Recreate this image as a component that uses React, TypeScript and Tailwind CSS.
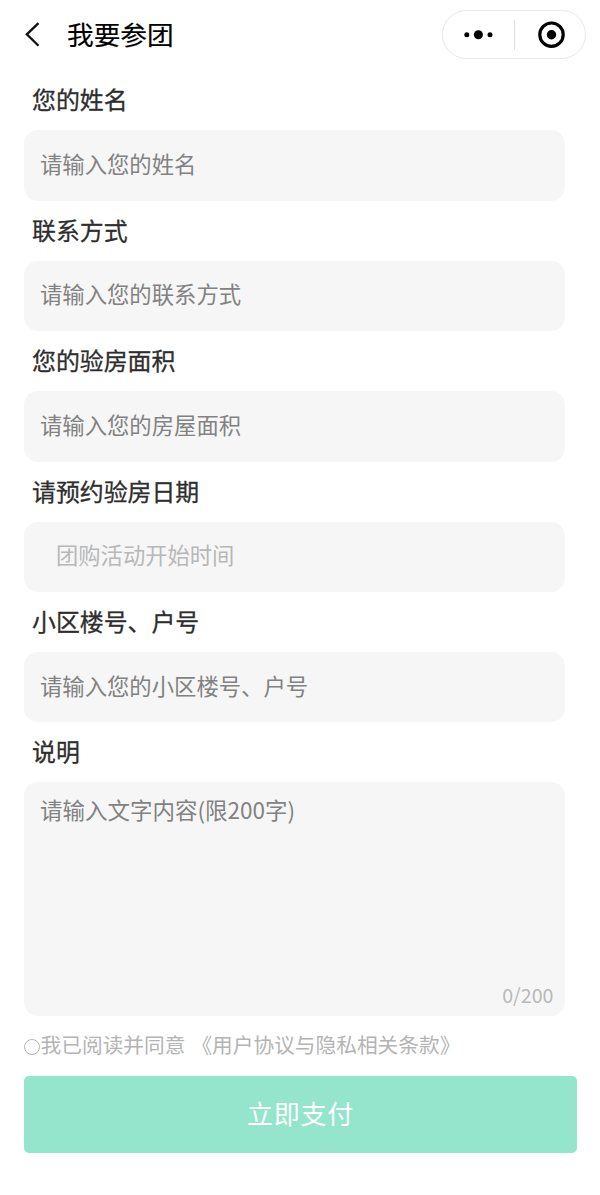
import { useState } from "react";

type FieldProps = { label: string; placeholder: string; muted?: boolean };

function Label({ children }: { children: string }) {
  return (
    <span className="flex h-[60px] items-center pb-[2px] pl-2 text-[23.9px] text-[#2e2e2e] [-webkit-text-stroke:0.3px_#2e2e2e]">
      {children}
    </span>
  );
}

function Field({ label, placeholder, muted }: FieldProps) {
  return (
    <label className="block">
      <Label>{label}</Label>
      <input
        className={
          muted
            ? "block h-[70.4px] w-full rounded-[14px] bg-[#f6f6f6] pr-4 pb-[5px] pl-8 text-[22.3px] outline-none placeholder:text-[#b8b8b8]"
            : "block h-[70.4px] w-full rounded-[14px] bg-[#f6f6f6] pr-4 pb-[5px] pl-4 text-[22.35px] outline-none placeholder:text-[#828282]"
        }
        placeholder={placeholder}
      />
    </label>
  );
}

const fields: FieldProps[] = [
  { label: "您的姓名", placeholder: "请输入您的姓名" },
  { label: "联系方式", placeholder: "请输入您的联系方式" },
  { label: "您的验房面积", placeholder: "请输入您的房屋面积" },
  { label: "请预约验房日期", placeholder: "团购活动开始时间", muted: true },
  { label: "小区楼号、户号", placeholder: "请输入您的小区楼号、户号" },
];

export default function App() {
  const [text, setText] = useState("");
  const [agreed, setAgreed] = useState(false);
  return (
    <main className="h-[1195px] w-[600px] overflow-hidden bg-white font-['Noto_Sans_CJK_SC',sans-serif]">
      <header className="flex h-[70.4px] items-start justify-between pr-[14px] pl-[24px]">
        <div className="flex h-[70px] items-center gap-[26px]">
          <svg className="h-[26px] w-[17px]" viewBox="0 0 17 26" fill="none" stroke="#111" strokeWidth="2.3">
            <path d="M14.5 1.2 2.8 12.3l11.7 11.5" />
          </svg>
          <h1 className="pb-[2px] text-[26.7px] text-black [-webkit-text-stroke:0.15px_#000]">我要参团</h1>
        </div>
        <div className="mt-[10px] flex h-[49px] w-[144px] items-center rounded-full border border-[#e8e8e8]">
          <button className="flex h-full w-[71px] items-center justify-center" aria-label="更多">
            <svg className="h-[12px] w-[30px]" viewBox="0 0 30 12" fill="#000">
              <circle cx="2.8" cy="5.7" r="2.5" />
              <circle cx="14.4" cy="5.7" r="4.5" />
              <circle cx="26" cy="5.7" r="2.5" />
            </svg>
          </button>
          <span className="h-[30px] w-px bg-[#e0e0e0]" />
          <button className="flex h-full flex-1 items-center justify-center pl-[2px]" aria-label="关闭">
            <svg className="h-[28px] w-[28px]" viewBox="0 0 28 28">
              <circle cx="14.5" cy="13.7" r="11.7" fill="none" stroke="#000" strokeWidth="3.2" />
              <circle cx="14.5" cy="13.7" r="4.7" />
            </svg>
          </button>
        </div>
      </header>
      <form className="w-[565.4px] pl-6" onSubmit={(e) => e.preventDefault()}>
        {fields.map((f) => (
          <Field key={f.label} {...f} />
        ))}
        <label className="block">
          <Label>说明</Label>
          <span className="flex h-[233.6px] flex-col rounded-[14px] bg-[#f6f6f6] px-4 pt-[11px]">
            <textarea
              className="w-full flex-1 resize-none text-[22.5px] leading-[32px] outline-none placeholder:text-[#828282]"
              placeholder="请输入文字内容(限200字)"
              maxLength={200}
              value={text}
              onChange={(e) => setText(e.target.value)}
            />
            <span className="-mr-1 pb-[5px] text-right text-[19.6px] leading-[32px] text-[#b8b8b8]">
              {text.length}/200
            </span>
          </span>
        </label>
        <div className="flex h-[60px] items-center text-[20.7px] text-[#b4b4b4]">
          <button
            type="button"
            aria-label="同意"
            onClick={() => setAgreed(!agreed)}
            className={
              agreed
                ? "mt-[2px] h-4 w-4 rounded-full border border-[#b8b8b8] bg-[#94e5cc]"
                : "mt-[2px] h-4 w-4 rounded-full border border-[#b8b8b8]"
            }
          />
          <span className="pb-[2px] pl-[0.6px] whitespace-nowrap">我已阅读并同意</span>
          <span className="ml-[6px] pb-[2px] text-[20.7px] whitespace-nowrap">《用户协议与隐私相关条款》</span>
        </div>
        <button className="flex h-[77px] w-[553px] items-center justify-center rounded-[5px] bg-[#94e5cc] pb-[4px] text-[26px] tracking-[0.7px] text-white">
          立即支付
        </button>
      </form>
    </main>
  );
}
